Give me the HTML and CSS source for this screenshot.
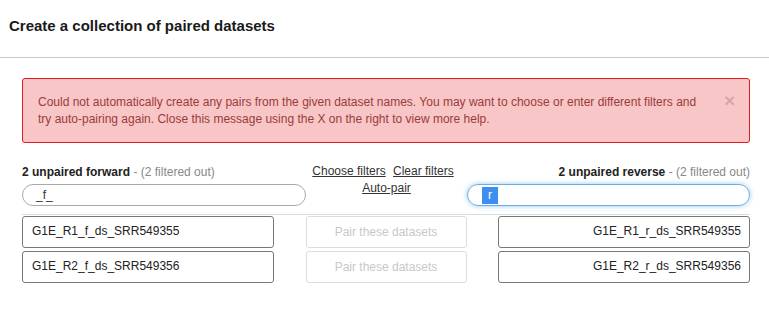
FILE: index.html
```html
<!DOCTYPE html>
<html lang="en">
  <head>
    <meta charset="UTF-8" />
    <meta name="viewport" content="width=device-width, initial-scale=1.0" />
    <title>Paired Collection Creator</title>
    <link rel="stylesheet" href="styles.css">
  </head>
  <body>
    <div class="header">
      <span class="title">Create a collection of paired datasets</span>
    </div>
    <div class="content">
      <div class="alert">
        <span class="alert-close">&times;</span>
        Could not automatically create any pairs from the given dataset names. You may want to choose or enter different filters and try auto-pairing again. Close this message using the X on the right to view more help.
      </div>

      <div class="filters">
        <div class="label forward">
          <b>2 unpaired forward</b> <span class="muted">- (2 filtered out)</span>
        </div>
        <div class="links">
          <div class="links-top">
            <a href="#">Choose filters</a>
            <a href="#">Clear filters</a>
          </div>
          <div><a href="#">Auto-pair</a></div>
        </div>
        <div class="label reverse">
          <b>2 unpaired reverse</b> <span class="muted">- (2 filtered out)</span>
        </div>
        <div class="filter-input forward-input">_f_</div>
        <div class="filter-input reverse-input focused"><span class="selected">r</span></div>
      </div>

      <div class="pairs">
        <div class="row">
          <div class="dataset">G1E_R1_f_ds_SRR549355</div>
          <button class="pair-btn" disabled>Pair these datasets</button>
          <div class="dataset right">G1E_R1_r_ds_SRR549355</div>
        </div>
        <div class="row">
          <div class="dataset">G1E_R2_f_ds_SRR549356</div>
          <button class="pair-btn" disabled>Pair these datasets</button>
          <div class="dataset right">G1E_R2_r_ds_SRR549356</div>
        </div>
      </div>
    </div>
  </body>
</html>
```

FILE: styles.css
```css
body {
  font-family: "Liberation Sans", Arial, sans-serif;
  margin: 0;
  padding: 0;
  color: #222;
  background-color: #ffffff;
}

.header {
  height: 58px;
  border-bottom: 1px solid #c8c8c8;
  padding: 17px 9px 0;
  box-sizing: border-box;
}

.title {
  font-size: 15px;
  font-weight: bold;
  color: #1a1a1a;
}

.content {
  padding: 20px 19px 0 22px;
}

/* Red warning box */
.alert {
  position: relative;
  background-color: #f8c6c6;
  border: 1px solid #e31a1e;
  border-radius: 3px;
  color: #9b3b3b;
  font-size: 12px;
  line-height: 17px;
  padding: 15px 50px 14px 15px;
}

.alert-close {
  position: absolute;
  right: 14px;
  top: 13px;
  font-size: 19px;
  font-weight: bold;
  color: #000;
  opacity: 0.15;
}

/* Filter row */
.filters {
  display: grid;
  grid-template-columns: 284px 1fr 283px;
  grid-template-rows: 16px 22px;
  row-gap: 4px;
  margin-top: 21px;
  font-size: 12px;
}

.label {
  line-height: 16px;
  color: #222;
  grid-row: 1;
}

.label.forward {
  grid-column: 1;
}

.label.reverse {
  grid-column: 3;
  text-align: right;
}

.muted {
  color: #888;
}

.links {
  grid-column: 2;
  grid-row: 1 / span 2;
  text-align: center;
  line-height: 17px;
  margin-top: -1px;
}

.links-top {
  padding-right: 7px;
}

.links a {
  color: #333;
  margin: 0 2px;
}

.filter-input {
  grid-row: 2;
  border: 1px solid #aaa;
  border-radius: 11px;
  height: 22px;
  box-sizing: border-box;
  padding-left: 13px;
  line-height: 20px;
  font-size: 12px;
  color: #333;
}

.forward-input {
  grid-column: 1;
}

.reverse-input {
  grid-column: 3;
}

.filter-input.focused {
  border-color: #66afe9;
  box-shadow: 0 0 5px rgba(102, 175, 233, 0.7);
  padding-left: 14px;
}

.selected {
  background-color: #3d8fef;
  color: #fff;
  padding: 1px 6px 2px;
}

/* Dataset rows */
.pairs {
  margin-top: 8px;
  border-top: 1px solid #ddd;
  padding-top: 1px;
}

.row {
  display: flex;
  justify-content: space-between;
  align-items: center;
  margin-bottom: 3px;
}

.dataset {
  width: 252px;
  height: 32px;
  box-sizing: border-box;
  border: 1px solid #777;
  border-radius: 3px;
  font-size: 12px;
  line-height: 28px;
  padding-left: 9px;
  color: #222;
}

.dataset.right {
  text-align: right;
  padding-right: 8px;
}

.pair-btn {
  width: 161px;
  height: 32px;
  border: 1px solid #ddd;
  border-radius: 3px;
  background-color: #fff;
  color: #c8c8c8;
  font-family: "Liberation Sans", Arial, sans-serif;
  font-size: 12px;
}
```
